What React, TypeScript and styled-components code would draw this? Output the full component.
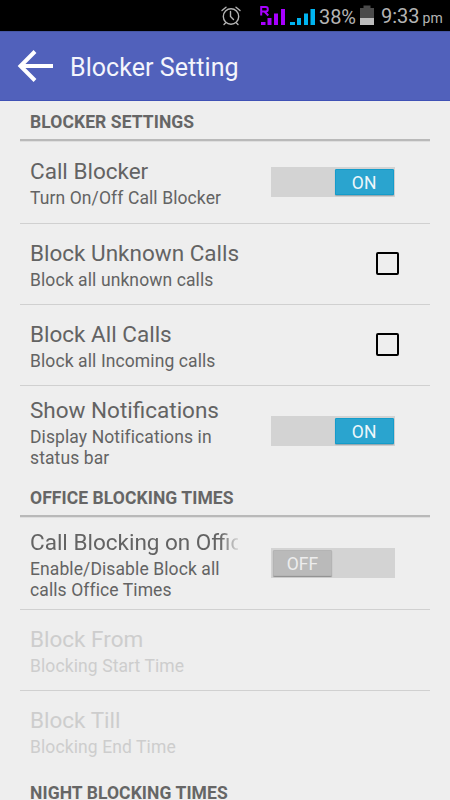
import React from "react";
import styled, { createGlobalStyle } from "styled-components";

const GlobalStyle = createGlobalStyle`
  * { box-sizing: border-box; }
  body { margin: 0; background: #eee; font-family: Roboto, sans-serif; }
`;

const Screen = styled.div`
  width: 450px;
  height: 800px;
  overflow: hidden;
  display: flex;
  flex-direction: column;
  background: #eee;
`;

const StatusBar = styled.div`
  flex: none;
  height: 31px;
  background: #000;
  color: #b4b4b4;
  display: flex;
  align-items: center;
  justify-content: flex-end;
  padding-right: 8px;
`;

const StatusIcons = styled.svg`
  display: block;
  width: 95px;
  height: 31px;
  margin-right: 3px;
`;

const Percent = styled.span`
  width: 37px;
  font-size: 20px;
  line-height: 31px;
  letter-spacing: -0.1px;
  white-space: nowrap;
  padding-top: 3px;
`;

const BatteryIcon = styled.svg`
  display: block;
  width: 14px;
  height: 31px;
  margin: 0 7px 0 4px;
`;

const Clock = styled.span`
  width: 61px;
  font-size: 20px;
  line-height: 31px;
  white-space: nowrap;
  padding-top: 3px;
`;

const Meridiem = styled.span`
  font-size: 14px;
  margin-left: 3px;
`;

const ActionBar = styled.header`
  flex: none;
  height: 70px;
  padding-left: 17px;
  display: flex;
  align-items: center;
  background: #5161bb;
  border-top: 1px solid #4657a5;
  border-bottom: 1px solid #3f51b5;
`;

const BackArrow = styled.svg`
  display: block;
  width: 37px;
  height: 36px;
  margin-right: 16px;
`;

const ScreenTitle = styled.h1`
  margin: 4px 0 0;
  font-size: 25px;
  font-weight: 400;
  line-height: 32px;
  letter-spacing: 0.06px;
  color: #f4f5fc;
  white-space: nowrap;
`;

const List = styled.main`
  flex: none;
  padding: 0 20px;
`;

const SectionHeader = styled.h2`
  margin: 0;
  height: 40px;
  padding: 2px 10px 0;
  border-bottom: 2px solid #b9b9b9;
  box-shadow: 0 1px 0 #dedede;
  font-size: 17.5px;
  font-weight: 700;
  line-height: 39px;
  letter-spacing: 0.08px;
  color: #666;
  white-space: nowrap;
`;

const Row = styled.div<{ $height: number; $last?: boolean }>`
  height: ${(p) => p.$height}px;
  padding-left: 10px;
  display: flex;
  align-items: center;
  border-bottom: 1px solid ${(p) => (p.$last ? "transparent" : "#d0d0d0")};
`;

const Labels = styled.div<{ $disabled?: boolean; $twoLine?: boolean }>`
  width: 211px;
  padding-top: ${(p) => (p.$twoLine ? 4 : 2)}px;
  color: ${(p) => (p.$disabled ? "#cdcdcd" : "#636363")};
`;

const Title = styled.div<{ $fade?: boolean }>`
  width: ${(p) => (p.$fade ? "208px" : "auto")};
  overflow: ${(p) => (p.$fade ? "hidden" : "visible")};
  font-size: 22.5px;
  line-height: 29px;
  white-space: nowrap;
  ${(p) => p.$fade && "mask-image: linear-gradient(to right, #000 190px, transparent 211px);"}
`;

const Summary = styled.div`
  font-size: 17.5px;
  line-height: 21px;
  padding-top: 2px;
  letter-spacing: 0.1px;
  white-space: pre;
`;

const SwitchTrack = styled.div<{ $on: boolean }>`
  width: 124px;
  height: 30px;
  margin-left: 30px;
  padding: 2px 1.4px 2px 2px;
  display: flex;
  justify-content: ${(p) => (p.$on ? "flex-end" : "flex-start")};
  background: #d3d3d3;
`;

const SwitchThumb = styled.div<{ $on: boolean }>`
  width: 59px;
  height: 26px;
  border-radius: 1.5px;
  background: ${(p) => (p.$on ? "#2aa4cf" : "#bababa")};
  box-shadow: inset 0 0 0 0.7px ${(p) => (p.$on ? "#0d99c9" : "#b2b2b2")},
    0 1px 1px ${(p) => (p.$on ? "#8fa5ad" : "#8c8c8c")};
  color: ${(p) => (p.$on ? "#eef7fb" : "#ededed")};
  font-size: 17.5px;
  line-height: 28px;
  text-align: center;
`;

const CheckBox = styled.div`
  width: 23px;
  height: 23px;
  margin-left: 135px;
  border: 2px solid #000;
  border-radius: 2px;
`;

function Switch({ on }: { on: boolean }) {
  return (
    <SwitchTrack $on={on}>
      <SwitchThumb $on={on}>{on ? "ON" : "OFF"}</SwitchThumb>
    </SwitchTrack>
  );
}

interface Setting {
  title: string;
  summary: string;
  height: number;
  control?: "on" | "off" | "check";
  last?: boolean;
  disabled?: boolean;
  fade?: boolean;
}

const sections: { heading: string; items: Setting[] }[] = [
  {
    heading: "BLOCKER SETTINGS",
    items: [
      { title: "Call Blocker", summary: "Turn On/Off Call Blocker", height: 82.5, control: "on" },
      { title: "Block Unknown Calls", summary: "Block all unknown calls", height: 81.3, control: "check" },
      { title: "Block All Calls", summary: "Block all Incoming calls", height: 81.2, control: "check" },
      { title: "Show Notifications", summary: "Display Notifications in\nstatus bar", height: 91, control: "on", last: true },
    ],
  },
  {
    heading: "OFFICE BLOCKING TIMES",
    items: [
      { title: "Call Blocking on Office", summary: "Enable/Disable Block all\ncalls Office Times", height: 93, control: "off", fade: true },
      { title: "Block From", summary: "Blocking Start Time", height: 81.3, disabled: true },
      { title: "Block Till", summary: "Blocking End Time", height: 81, disabled: true, last: true },
    ],
  },
  { heading: "NIGHT BLOCKING TIMES", items: [] },
];

export default function App() {
  return (
    <Screen>
      <GlobalStyle />
      <StatusBar>
        <StatusIcons viewBox="221 0 95 31">
          <g fill="none" stroke="#b4b4b4" strokeWidth="1.4" strokeLinecap="round">
            <circle cx="231" cy="16.5" r="7.7" />
            <path d="M230.500 11.500v5l3 3M222 10.500l4-3.300M240 10.500l-4-3.300M225.500 23l-1.500 1.500M236.500 23l1.500 1.500" />
          </g>
          <path d="M261.200 15.500V7.100h4.600q2 0 2 2.200t-2 2.200h-4.600M264.500 11.500l3.800 4" fill="none" stroke="#a800ff" strokeWidth="2" />
          <path d="M261 22h4.500v3H261zM267.500 18h4v7h-4zM274 13.500h4V25h-4zM281 9h4v16h-4z" fill="#a800ff" />
          <path d="M290 22h5v3h-5zM297 18h4v7h-4zM304 13.500h4V25h-4zM310.500 9h4.500v16h-4.500z" fill="#00b4f0" />
        </StatusIcons>
        <Percent>38%</Percent>
        <BatteryIcon viewBox="0 0 14 31">
          <path d="M3.500 5.500h7V8H14v10H0V8h3.500z" fill="#4b4b4b" />
          <path d="M0 18h14v7H0z" fill="#bcbcbc" />
        </BatteryIcon>
        <Clock>
          9:33<Meridiem>pm</Meridiem>
        </Clock>
      </StatusBar>
      <ActionBar>
        <BackArrow viewBox="0 0 37 36" fill="none" stroke="#fff" strokeWidth="4">
          <path d="M18 3.500L3.500 18L18 32.500M3.500 18H36" />
        </BackArrow>
        <ScreenTitle>Blocker Setting</ScreenTitle>
      </ActionBar>
      <List>
        {sections.map((section) => (
          <section key={section.heading}>
            <SectionHeader>{section.heading}</SectionHeader>
            {section.items.map((item) => (
              <Row key={item.title} $height={item.height} $last={item.last}>
                <Labels $disabled={item.disabled} $twoLine={item.summary.includes("\n")}>
                  <Title $fade={item.fade}>{item.title}</Title>
                  <Summary>{item.summary}</Summary>
                </Labels>
                {item.control === "check" && <CheckBox />}
                {(item.control === "on" || item.control === "off") && <Switch on={item.control === "on"} />}
              </Row>
            ))}
          </section>
        ))}
      </List>
    </Screen>
  );
}
